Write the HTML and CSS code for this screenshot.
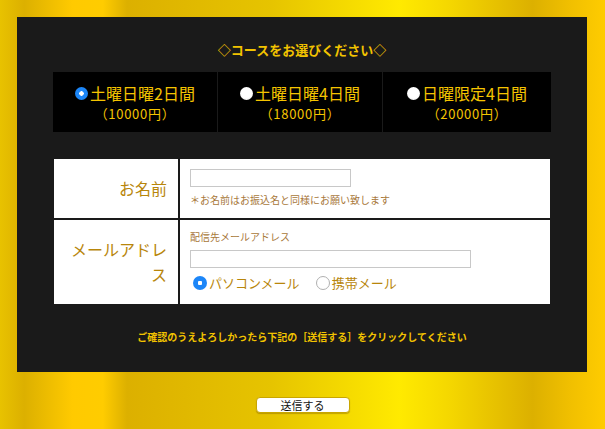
FILE: index.html
```html
<!DOCTYPE html>
<html lang="ja">
<head>
<meta charset="utf-8">
<title>お申し込み</title>
<link rel="stylesheet" href="styles.css">
</head>
<body>
<form class="page">
  <div class="panel">
    <h2 class="title">◇コースをお選びください◇</h2>
    <div class="courses">
      <label class="course">
        <span class="course-name"><input type="radio" name="course" class="radio radio-course" checked>土曜日曜2日間</span>
        <span class="course-price">（10000円）</span>
      </label>
      <label class="course">
        <span class="course-name"><input type="radio" name="course" class="radio radio-course">土曜日曜4日間</span>
        <span class="course-price">（18000円）</span>
      </label>
      <label class="course">
        <span class="course-name"><input type="radio" name="course" class="radio radio-course">日曜限定4日間</span>
        <span class="course-price">（20000円）</span>
      </label>
    </div>
    <div class="form-table">
      <div class="label-cell">お名前</div>
      <div class="field-cell field-name">
        <input type="text" class="text-input input-name">
        <p class="note">＊お名前はお振込名と同様にお願い致します</p>
      </div>
      <div class="label-cell">メールアドレス</div>
      <div class="field-cell field-mail">
        <p class="note">配信先メールアドレス</p>
        <input type="text" class="text-input input-mail">
        <div class="mail-types">
          <label class="mail-type"><input type="radio" name="mtype" class="radio radio-form" checked>パソコンメール</label>
          <label class="mail-type"><input type="radio" name="mtype" class="radio radio-form">携帯メール</label>
        </div>
      </div>
    </div>
    <p class="confirm">ご確認のうえよろしかったら下記の［送信する］をクリックしてください</p>
  </div>
  <div class="actions">
    <button type="button" class="submit">送信する</button>
  </div>
</form>
</body>
</html>
```
FILE: styles.css
```css
html {
  background: linear-gradient(to right,
    #e8c200 0%,
    #dcb000 4%,
    #ffca00 12%,
    #ffcc00 17%,
    #dcb000 21%,
    #e6c400 45%,
    #ffea00 66%,
    #f5d800 74%,
    #dcb000 88%,
    #f0bf00 94%,
    #ffcc00 100%);
  min-height: 100%;
}

body {
  margin: 0;
  font-family: "Noto Sans CJK JP", "Noto Sans", sans-serif;
}

.page {
  margin: 0;
  padding: 17px 18px 16px 17px;
}

.panel {
  background: #1a1a1a;
  padding: 23px 36px 28px;
  height: 355px;
  box-sizing: border-box;
}

.title {
  margin: 0;
  text-align: center;
  font-size: 13px;
  line-height: 20px;
  font-weight: bold;
  color: #f2c300;
}

.courses {
  margin-top: 12px;
  display: grid;
  grid-template-columns: 164px 164px 1fr;
  column-gap: 1px;
}

.course {
  background: #000;
  display: flex;
  flex-direction: column;
  align-items: center;
  padding: 11px 0 9px;
  color: #f5c400;
}

.course-name {
  display: flex;
  align-items: center;
  font-size: 16px;
  line-height: 22px;
  margin-top: -1px;
}

.course-price {
  font-size: 13px;
  line-height: 18px;
  margin-top: 1px;
  letter-spacing: 0.7px;
}

.radio {
  -webkit-appearance: none;
  appearance: none;
  margin: 0;
  border-radius: 50%;
  box-sizing: border-box;
  flex: none;
}

.radio-course {
  width: 13px;
  height: 13px;
  margin-right: 2px;
  background: radial-gradient(circle at 50% 40%, #ffffff 55%, #e0e0e0 100%);
}

.radio-course:checked,
.radio-form:checked {
  background: radial-gradient(circle, #ffffff 0 2px, #1c86f8 2.5px);
  border: none;
}

.form-table {
  margin: 27px 1px 0;
  display: grid;
  grid-template-columns: 124px 1fr;
  grid-template-rows: 59px 84px;
  gap: 2px;
}

.label-cell {
  background: #fff;
  color: #b8860b;
  font-size: 16px;
  line-height: 25px;
  text-align: right;
  padding: 0 11px 0 10px;
  display: flex;
  align-items: center;
  justify-content: flex-end;
}

.field-cell {
  background: #fff;
  padding: 10px 10px 0;
  display: flex;
  flex-direction: column;
  align-items: flex-start;
}

.text-input {
  height: 18px;
  box-sizing: border-box;
  border: 1px solid #c8c8c8;
  margin: 0;
  padding: 0 3px;
  background: #fff;
}

.input-name {
  width: 161px;
}

.input-mail {
  width: 281px;
  margin-top: 6px;
}

.note {
  margin: 0;
  font-size: 10px;
  line-height: 14px;
  color: #a8783a;
}

.field-name .note {
  margin-top: 6px;
}

.mail-types {
  display: flex;
  gap: 16px;
  margin-top: 6px;
  margin-left: 3px;
}

.mail-type {
  display: flex;
  align-items: center;
  font-size: 13px;
  line-height: 18px;
  color: #b8860b;
}

.radio-form {
  width: 14px;
  height: 14px;
  margin-right: 2px;
  border: 1px solid #b0b0b0;
  background: #fff;
}

.confirm {
  margin: 26px 0 0;
  text-align: center;
  font-size: 10px;
  line-height: 14px;
  font-weight: bold;
  color: #f2c300;
}

.actions {
  display: flex;
  justify-content: center;
  padding-top: 25px;
  padding-left: 1px;
}

.submit {
  width: 94px;
  height: 16px;
  padding: 0;
  border: 1px solid #c9a600;
  border-radius: 4px;
  background: #fff;
  font-family: "Noto Sans CJK JP", sans-serif;
  font-size: 11px;
  line-height: 14px;
  color: #111;
  box-shadow: 0 1px 1px rgba(120, 90, 0, 0.4);
}
```
